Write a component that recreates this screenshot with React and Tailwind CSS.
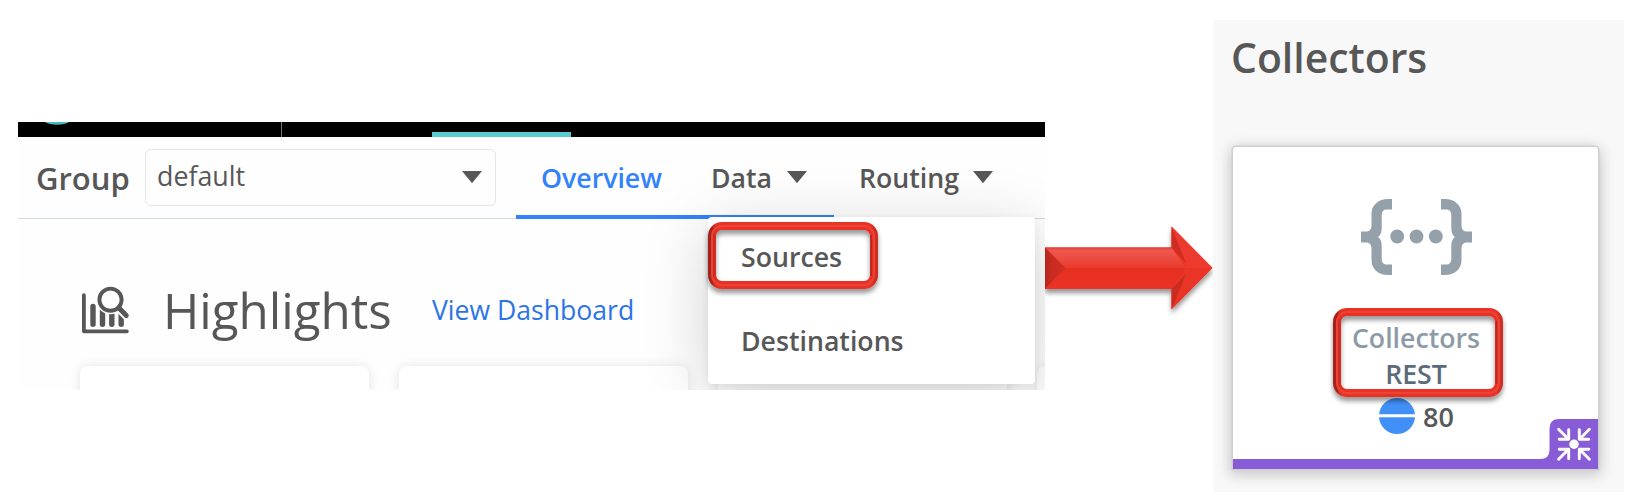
import React from 'react';

function Caret({ className = '' }) {
  return (
    <svg viewBox="0 0 20 12" className={`h-[12px] w-[20px] shrink-0 ${className}`}>
      <path d="M0 0H20L10.6 11.6Q10 12.3 9.4 11.6Z" fill="#575757" />
    </svg>
  );
}

/* Bevelled red rounded frame used to call out an item. */
function Frame({ id, w, h, className }) {
  return (
    <svg width={w} height={h} viewBox={`0 0 ${w} ${h}`} className={`pointer-events-none absolute overflow-visible ${className}`}>
      <defs>
        <linearGradient id={`${id}s`} x1="0" x2="1" y1="0" y2="0">
          <stop offset="0" stopColor="#a5241b" />
          <stop offset="0.012" stopColor="#d02e22" />
          <stop offset="0.04" stopColor="#e93326" />
          <stop offset="0.985" stopColor="#e93326" />
          <stop offset="1" stopColor="#cf2d22" />
        </linearGradient>
        <filter id={`${id}f`} x="-10%" y="-20%" width="120%" height="150%">
          <feDropShadow dx="0" dy="4" stdDeviation="2.6" floodColor="#000" floodOpacity="0.42" />
        </filter>
      </defs>
      <g fill="none">
        <rect x="4" y="4" width={w - 8} height={h - 8} rx="10" stroke={`url(#${id}s)`} strokeWidth="8" filter={`url(#${id}f)`} />
        <rect x="4" y="4" width={w - 8} height={h - 8} rx="10" stroke="#ef4236" strokeWidth="2" />
        <path d={`M7 14V${h - 14}`} stroke="#cd2e23" strokeWidth="1.4" />
        <path d={`M${w - 6.8} 13V${h - 13}`} stroke="#b5281e" strokeWidth="1.6" />
      </g>
    </svg>
  );
}

function HighlightsIcon() {
  return (
    <svg viewBox="0 0 48 48" className="mt-[1px] h-[48px] w-[48px] shrink-0" fill="none" stroke="#575757" strokeLinecap="round">
      <path d="M1.900 9.200V45.300H44.900" strokeWidth="3.8" strokeLinejoin="round" />
      <g strokeWidth="5.4">
        <path d="M11 20.500V38.2" />
        <path d="M20.500 22V38.2" />
        <path d="M29.800 24V38.2" />
        <path d="M39.200 24V38.2" />
      </g>
      <path d="M35.500 21.500L46 31.700" stroke="#fefefe" strokeWidth="8" strokeLinecap="butt" />
      <circle cx="28.500" cy="13.7" r="14.600" fill="#fefefe" stroke="none" />
      <circle cx="28.500" cy="13.7" r="11.1" strokeWidth="3.9" />
      <path d="M36.700 21.700L44.300 29.500" strokeWidth="4.9" />
    </svg>
  );
}

function BracesIcon() {
  const brace = 'M31 0H27C17.500 0 10.500 6 10.500 15V26C10.500 30 9 32.500 5 32.500H0V43.500H5C9 43.500 10.500 46 10.500 50V61C10.500 70 17.500 76 27 76H31V65.500H26C22.500 65.500 20.700 63.500 20.700 60V47C20.700 42.500 19.500 40 17 38C19.500 36 20.700 33.500 20.700 29V16C20.700 12.500 22.500 10.500 26 10.500H31Z';
  return (
    <svg viewBox="0 0 111 76" className="ml-px h-[76px] w-[111px]" fill="#94a1ab">
      <path d={brace} />
      <path d={brace} transform="translate(111 0) scale(-1 1)" />
      <circle cx="36.200" cy="37.500" r="6.900" />
      <circle cx="55.500" cy="37.500" r="6.900" />
      <circle cx="74.800" cy="37.500" r="6.900" />
    </svg>
  );
}

function CollapseTag() {
  const arrow = 'M-15.400 -15L-6 -5.600M-14.800 -5H-5.300V-14.500';
  return (
    <svg viewBox="0 0 59 50" className="absolute right-0 bottom-0 h-[50px] w-[59px]">
      <path d="M59 0H20Q10.500 0 10.500 9.500V31Q10.500 40 1 40H0V50H59Z" fill="#885cd6" />
      <g transform="translate(35 25.300)" fill="none" stroke="#fff" strokeWidth="2.900" strokeLinecap="round" strokeLinejoin="round">
        <path d={arrow} />
        <path d={arrow} transform="scale(-1 1)" />
        <path d={arrow} transform="scale(1 -1)" />
        <path d={arrow} transform="scale(-1 -1)" />
        <circle r="4.700" fill="#fff" stroke="none" />
      </g>
    </svg>
  );
}

function Arrow() {
  return (
    <svg viewBox="0 0 168 84" className="mt-[226px] h-[84px] w-[168px] shrink-0 overflow-visible">
      <defs>
        <linearGradient id="top" x1="0" x2="0" y1="0" y2="1">
          <stop offset="0" stopColor="#e83a2f" />
          <stop offset="0.15" stopColor="#ee5850" />
          <stop offset="1" stopColor="#e93a2d" />
        </linearGradient>
        <linearGradient id="bottom" x1="0" x2="0" y1="0" y2="1">
          <stop offset="0" stopColor="#e52f20" />
          <stop offset="1" stopColor="#ec3325" />
        </linearGradient>
        <linearGradient id="end" x1="0" x2="1" y1="0" y2="0">
          <stop offset="0" stopColor="#b3271d" />
          <stop offset="0.3" stopColor="#c82b20" />
          <stop offset="1" stopColor="#d42e22" />
        </linearGradient>
        <filter id="drop" x="-10%" y="-10%" width="120%" height="140%">
          <feDropShadow dx="0" dy="4" stdDeviation="2.800" floodColor="#000" floodOpacity="0.420" />
        </filter>
      </defs>
      <path d="M0 21.500H126.500V.5L167.500 42L126.500 83.500V63H0Z" fill="#ea3426" filter="url(#drop)" />
      <path d="M0 21.500H126.500L141 42H0Z" fill="url(#top)" />
      <path d="M0 42H141L126.500 63H0Z" fill="url(#bottom)" />
      <path d="M0 21.500L20.500 42L0 63Z" fill="url(#end)" />
      <path d="M126.500 .5L141 37L126.500 21.500Z" fill="#cf2d22" />
      <path d="M126.500 83.500L141 48L126.500 63Z" fill="#cb2c21" />
      <path d="M141 42H167.500L126.500 .5L141 37Z" fill="#ec3b2e" />
    </svg>
  );
}

export default function App() {
  return (
    <div className="flex h-[500px] w-[1632px] items-start overflow-hidden bg-white pl-[18px] font-['Open_Sans',sans-serif] text-[#575757]">
      <section className="relative mt-[122px] h-[268px] w-[1027px] shrink-0 overflow-hidden bg-[#fefefe]">
        <div className="flex h-[15px] items-end overflow-hidden bg-black">
          <svg viewBox="0 0 24 3" className="ml-[27px] h-[3px] w-[24px] self-start">
            <path d="M0 0H24Q20 2.600 12 2.800Q4 2.600 0 0Z" fill="#4bb8bb" />
          </svg>
          <div className="ml-[212px] h-full w-px bg-[#777]" />
          <div className="ml-[150px] h-[5px] w-[139px] bg-[#5accd0]" />
        </div>

        <header className="flex h-[82px] items-center border-b border-[#d0dae2] pl-[18px] text-[26.700px] font-semibold whitespace-nowrap">
          <span className="w-[109px] shrink-0 pt-[2px] text-[31px] leading-none">Group</span>
          <div className="flex h-[57px] w-[351px] shrink-0 items-center justify-between rounded-[6px] border border-[#e6e6e6] pr-[13px] pl-[11px] font-normal">
            <span className="pb-[2px] text-[26.800px] leading-none">default</span>
            <Caret className="mb-[1px]" />
          </div>
          <nav className="flex h-full items-center pl-[20px]">
            <div className="flex h-full items-center pl-[25px] text-[#3182fb]">
              <span className="w-[170px] pt-[2px] leading-none">Overview</span>
            </div>
            <div className="flex items-center">
              <span className="w-[76px] pt-[2px] leading-none">Data</span>
              <Caret />
            </div>
            <div className="ml-[52px] flex items-center">
              <span className="w-[114px] pt-[2px] leading-none">Routing</span>
              <Caret />
            </div>
          </nav>
        </header>
        <div className="relative -mt-[4px] ml-[498px] h-[4px] w-[318px] bg-[#3182fb]" />

        <div className="flex h-[147px] items-center pt-[33px] pl-[63.500px] whitespace-nowrap">
          <HighlightsIcon />
          <h2 className="ml-[33.500px] w-[269px] pt-[2px] text-[49.300px] leading-none">Highlights</h2>
          <a className="pt-[2px] text-[26.600px] leading-none text-[#2b74e8]">View Dashboard</a>
        </div>
        <div className="flex gap-[30px] pl-[62px]">
          {[0, 1, 2, 3].map((i) => (
            <div key={i} className="h-[60px] w-[289px] shrink-0 rounded-[8px] bg-white shadow-[0_0_12px_rgba(0,0,0,0.100)]" />
          ))}
        </div>

        <div className="absolute top-[94.500px] left-[690px] flex h-[167.500px] w-[326.500px] flex-col rounded-[4px] bg-white pl-[33px] text-[26.700px] font-semibold shadow-[0_14px_64px_rgba(0,0,0,0.180),0_2px_8px_rgba(0,0,0,0.060)]">
          <div className="flex h-[82px] items-center leading-none">Sources</div>
          <div className="flex h-[86.500px] items-center leading-none">Destinations</div>
          <Frame id="a" w={170} h={67} className="top-[5.500px] left-0" />
        </div>
      </section>

      <Arrow />

      <section className="mt-[20px] h-[472px] w-[411px] shrink-0 bg-[#f8f8f8] pl-[20px]">
        <h2 className="-ml-[2px] flex h-[73px] items-center pt-[2px] text-[40.900px] leading-none font-semibold">Collectors</h2>
        <div className="relative mt-[54px] flex h-[322px] w-[365px] flex-col items-center rounded-t-[3px] bg-white shadow-[0_0_0_1.500px_#cfcfcf,0_3px_14px_3px_rgba(0,0,0,0.200)]">
          <div className="mt-[51.500px]">
            <BracesIcon />
          </div>
          <div className="mt-[45.500px] ml-px flex flex-col items-center text-[26.700px] leading-[35.500px] font-semibold">
            <span className="text-[#8d9ba7]">Collectors</span>
            <span className="text-[#5b6b7b]">REST</span>
          </div>
          <div className="mt-[7px] ml-[2px] flex items-center gap-[8px] text-[27px] leading-none font-semibold">
            <svg viewBox="0 0 36 36" className="h-[36px] w-[36px]">
              <circle cx="18" cy="18" r="18" fill="#4190f7" />
              <path d="M0 17.800H36" stroke="#fff" strokeWidth="3" />
            </svg>
            <span>80</span>
          </div>
          <div className="absolute bottom-0 h-[10px] w-full bg-[#885cd6]" />
          <CollapseTag />
          <Frame id="b" w={170} h={89} className="top-[161px] left-[100px]" />
        </div>
      </section>
    </div>
  );
}
